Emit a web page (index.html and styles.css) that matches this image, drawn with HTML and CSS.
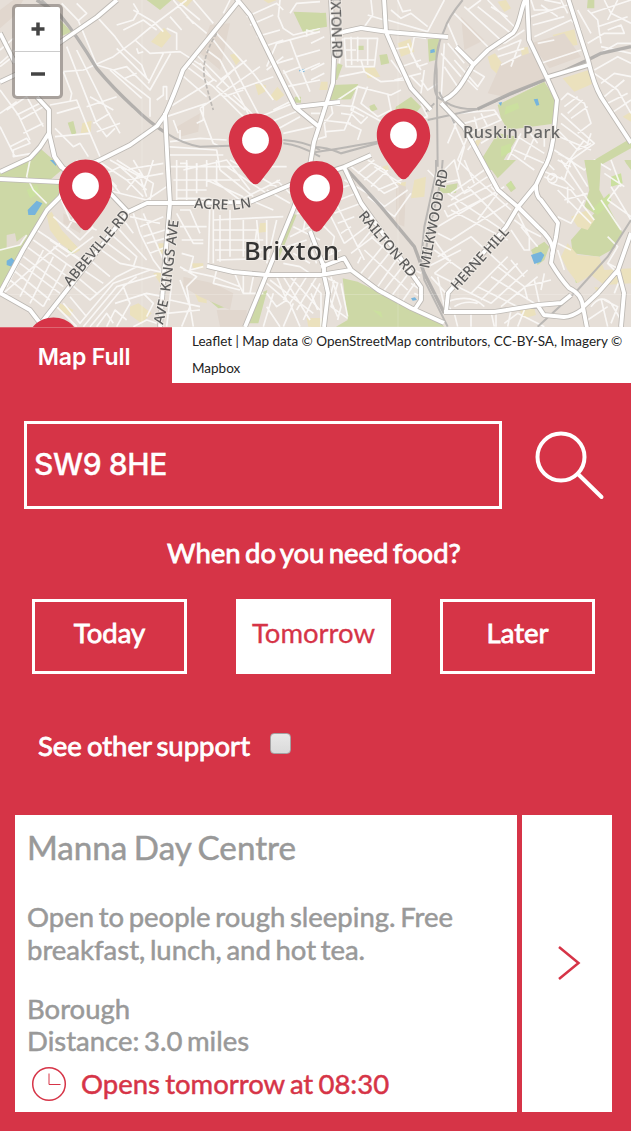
FILE: index.html
```html
<!DOCTYPE html>
<html lang="en">
<head>
<meta charset="utf-8">
<meta name="viewport" content="width=device-width, initial-scale=1">
<title>Food finder</title>
<link rel="stylesheet" href="styles.css">
</head>
<body>
<main class="page">
<section class="map">
<svg class="map-canvas" viewBox="0 0 631 327" width="631" height="327">
  <defs>
    <path id="pin" d="M0 0C-15.5 0-26.7 11.8-26.7 27C-26.7 42-14 56-5 68Q0 73.500 5 68C14 56 26.700 42 26.700 27C26.700 11.800 15.500 0 0 0Z"/>
    <g id="major">
      <path d="M117 0L97 17L62 41L15 75L0 82M238 2L213 33L183 70Q174 95 165 115L157 126L130 145L100 160L72 172M236-2L250 15L295 107L318 126M295 107L340 102M331 0L334 60L333 83L314 142L310 165L293 210L245 327M384-2L386 32L398 60L411 88L431 110M338 33L361 28L388 32L448 37M525 0C520 12 520 25 513 33L488 50L473 65L464 80Q456 94 444 100M527-2L529 40L548 80L557 100L553 140Q550 160 543 170L536 185L518 207L506 227L448 293L446 312M568-2L588 60Q594 85 601 97L631 143M441 103L464 127L478 153L498 190L518 207L538 227Q552 239 553 250L551 263Q560 278 569 288Q582 294 583 307L587 328M548 77L588 65M456 47L473 64"/>
      <path d="M536 185Q536 197 541 200L558 223L556 237L552 255M444 312L494 312L538 305L561 303L571 295M583 309Q572 317 564 317L544 315L538 306M583 307L598 293L618 270L631 233M618 270L624 293L621 327M344 167L361 203L414 277L421 287V300L415 309M267 275H320L351 270L378 290L411 308L444 323M310 231L324 267L324 275L328 293L324 327M321 267L344 258L351 270M207 266L233 272L267 275M128 212L147 203H195L250 202L290 185L344 167L371 155M165 113L168 170L170 203L165 260L160 327M42 322L128 212L110 193L61 167L55 158L49 133M0 179L60 182M72 172L60 197L47 210L23 250L0 293L30 310L40 323M37 97L49 110V133L40 147L30 158L0 172M49 133L54 156L72 180M0 33L15 63"/>
    </g>
  </defs>
  <rect class="land" width="631" height="327"/>

  <g class="tiles">
  <!-- North west quarter -->
  <g transform="scale(.33333)">
    <path class="park" d="M440 0H515L480 30ZM180 60L215 95L185 108ZM120 445L195 510H60V480L95 470ZM880 35L960 38V90L910 98ZM203 368L220 363L229 400L216 406ZM885 290H903V308H880Z"/>
    <path class="school" d="M492 83L514 107L485 143L453 125ZM530 0H578L560 20ZM690 165L705 160L720 182L708 196ZM765 252L798 255L795 275L775 286ZM832 260L853 285L830 303L808 292ZM247 370L275 362L272 395L242 400ZM790 0H830L805 10Z"/>
    <path class="built" d="M0 30L40 0H70L40 50L0 85ZM630 75L690 70L660 210L600 160ZM530 380L600 340L595 395L540 410Z"/>
    <path class="water" d="M897 210L915 206L913 216L900 217ZM150 480L166 482L165 494L152 496Z"/>
    <path class="minor" d="M185 10L235 62L290 195L340 210L450 295V350M220 95L285 195M235 62L260 40L230 10M290 50L345 110L370 145L425 195L440 235M190 215L250 210L340 170L400 125L460 75L560 0M400 10L415 35L400 60L350 75M370 90L430 60L470 90M400 30L460 65L490 95M405 120L450 160L540 155L610 200M350 145L450 245M340 210L380 200L450 270L512 160M445 250L490 160M375 235L410 220M330 210L425 295M430 155L415 160L410 145M500 85L530 100V150M510 50L545 90M520 0L580 70M540 10L600 60M580 0L640 70M560 50L620 100M470 300L490 285V260H500V300M200 140L290 370L320 410L345 385M190 215L215 280L210 305M230 150L320 330L360 400M270 290L340 330M260 320L350 290M280 370L330 340M290 395L360 370M150 315L230 300L270 400L300 470M170 340L240 320M165 385L220 440L240 430L265 470M165 410L270 400M0 150L40 115M0 190L45 150M0 200L45 165M0 270L55 345L90 420M0 340L50 305M20 330L80 290L130 380M50 345L120 310M60 360L130 320M70 400L130 370M0 380L45 470M30 440L80 415L90 430L40 450V470L95 460M540 220L620 290M560 200L640 260M570 185L650 245M590 165L690 265M640 120L700 200L790 370M620 150L660 180L760 370M650 100L760 220L820 300M600 190L640 240L510 320M700 210L650 260L735 330M740 180L660 240M780 200L600 325M800 210L850 170M640 260L730 350M710 270L820 230M700 285L760 345M670 290L730 270M600 325L640 430L660 440M500 350L620 310M520 360L535 400M510 330L490 350M510 425L600 415L680 420M540 390V420M610 320V360L590 370M500 440L650 450L660 510M500 465L670 465M540 490H560V510M590 490V510M690 0L670 40M750 75L820 45M770 110L840 90M790 140L850 120M740 50L830 10L850 30M840 0L835 50L850 85L880 105L960 85M870 40L890 10L960 5M800 200L830 130L960 95M870 120L900 200L930 275M830 190L880 175M850 220L900 200M890 170L960 150M900 215L960 190M860 260L960 240M850 210L900 300M820 330L880 300M780 350L880 310M790 375L900 330M810 400L900 350M850 400L940 380M920 110V90L945 100"/>
    <path class="rail wide" d="M110 0L180 45Q230 105 290 205Q340 265 400 320Q450 370 500 400"/>
    <path class="rail" d="M500 400Q550 432 600 440L690 437M125 0L190 60M850 420Q920 425 960 450M850 430Q900 435 960 470"/>
    <path class="tunnel" d="M650 100Q600 180 615 240T640 330"/>
  </g>

  <!-- North east quarter -->
  <g transform="translate(311 0) scale(.33333)">
    <path class="park" d="M0 40L45 38L48 80L0 88ZM80 190L95 195L78 240H65ZM65 255L142 252L120 298L55 300ZM350 118L385 115L375 180L354 185ZM205 165L228 162L235 190L210 195ZM138 137H158V150H138ZM175 318L190 312L200 328L180 336ZM255 320L300 290L330 320L310 345H250ZM560 315L700 245L735 300L722 372L590 390L570 355ZM560 400L620 410L560 510H525L510 480ZM850 480L960 415V445L860 500ZM830 0H850V25H828Z"/>
    <path class="woods" d="M585 320L620 308L625 325L580 345ZM570 440L600 430L600 455L570 470Z"/>
    <path class="school" d="M560 5L585 0L600 25L580 36ZM260 130L298 116L310 155L270 170ZM160 205L190 200L208 230L170 235ZM530 170L552 160L580 200L565 228L540 205ZM725 105L790 88L800 135L750 142ZM755 235L840 208L848 250L790 275ZM628 145L650 140L655 165L635 172ZM490 420L510 420L500 442ZM935 350L960 335V365ZM30 245H50V270H25ZM215 500L230 495L235 510H215Z"/>
    <path class="built" d="M570 190L680 150L710 240L580 290L530 280ZM660 130L760 100L810 170L715 205ZM450 50L520 120L460 150Z"/>
    <path class="water" d="M358 150L370 146L372 157L358 160ZM668 298L680 296L685 315L676 317ZM562 308L573 306L570 318Z"/>
    <path class="minor" d="M100 115H200L190 200H105ZM120 110L122 195M140 110V185M170 115V195M105 180H190M105 150H135M95 115L85 190M0 210L40 190M0 130L40 110M0 240L40 220M0 315H40M85 230L160 215L210 245L280 240M140 260L240 285L270 270M160 215L150 180M20 310L130 320L240 380L350 350M60 310L65 340L40 370L45 410L10 420M130 320L100 390L45 395M80 300L140 260L120 330L160 350M170 260L150 310L200 350L240 330L230 280M110 370L150 390L140 420M90 340L125 345L150 370L170 350M0 340H40M30 360L120 370M180 0L185 45L160 80M170 45L220 60M230 60L350 95L400 0M240 30L270 55L300 40L350 80M260 0L275 35L300 30M250 100L345 115M310 110L300 160L330 210M290 130L320 200L350 190M240 150L290 140M270 200L330 180M330 240L350 270L380 250M340 210L330 280M300 230L330 260M350 350L330 310M240 180L300 260M250 240L330 220M460 20L580 130M430 40L540 150M410 70L440 140M500 20L600 100M470 30L510 0M530 0L620 90M540 20L590 50M580 130L640 90M410 130L460 190M390 160L450 230M400 200L440 260M400 130L390 300M470 200L520 230L500 260L430 180M470 240L500 270M560 150L630 120L600 200M560 170L640 145M570 195L630 165M660 50L770 15M665 75L760 50M670 110L780 60L810 90M690 15L740 50M700 0L750 10M750 0L770 40M660 0L670 30L720 30M680 130L730 120M690 190L810 150M840 40L960 0M860 80L950 50M830 130L880 100L940 100L930 75L890 90M830 30L860 60L870 130M800 30L840 100M880 0L900 40L960 70M890 60L920 0M850 170L920 130L960 130M850 210L920 170L960 190M870 140L960 160M850 220L920 270L960 340M870 250L910 220L960 230M880 290L940 240M890 310L950 280M900 340L960 300M750 300L770 280L820 310L840 370L800 400M760 320L800 290M770 340L815 300M780 355L830 320M750 370L830 430L840 400M740 390L800 450L840 430M750 340L850 430L780 480L740 460M720 400L840 450M730 450L820 510L850 480L900 510M740 480L780 500M760 500L820 420M620 410L700 460M610 450L700 490M600 460L670 510M630 400L590 480M650 390L680 430M680 390L640 480M700 400L700 440M440 340L550 330L570 360L480 400M460 370L560 340M490 350L500 390M510 340L530 380M420 350L460 440L440 510M440 360L410 430M470 410L440 480M500 410L470 450M510 430L560 400"/>
    <path class="rail" d="M455 0Q410 55 400 90Q370 150 377 210L380 500M385 130Q370 200 370 250T400 300L430 370M0 440Q50 440 90 460L200 430M0 458Q60 450 200 425M350 360L500 327L700 240M385 275Q400 330 500 327M345 335L370 310"/>
    <path class="rail wide" d="M500 327L600 280L700 240L830 180L870 160L960 140"/>
  </g>

  <!-- South west quarter -->
  <g transform="translate(0 160) scale(.33333)">
    <path class="park" d="M0 60L80 50L180 68V100L135 150L70 265L0 385ZM60 0H170L185 30L150 60L0 55V35ZM872 158L890 165L835 300L818 280ZM780 400L802 390L775 490H745ZM203 260L220 250L240 270L208 285ZM620 415L680 405L690 440L655 445Z"/>
    <path class="woods" d="M80 90L110 75L120 100L90 115Z"/>
    <path class="school" d="M140 165L155 155L185 210L240 270L225 280L180 250L150 210ZM780 190L800 188L802 215L775 218ZM475 250L502 250L505 280L478 282ZM390 440L415 430L455 460L425 490L390 465ZM580 390L620 375V430L595 425ZM180 430L220 450L210 470L175 450ZM920 475H960V500H925ZM460 340L485 335L480 370ZM575 310H610V325H580Z"/>
    <path class="built" d="M550 350L640 370L700 400L690 450L600 410L550 380ZM190 160L250 190L240 220L190 190ZM650 450L740 450V500H660Z"/>
    <path class="clearing" d="M20 225L45 220L50 245L75 225L65 255L20 265Z"/>
    <path class="water" d="M83 150L110 122L127 130L105 165H85ZM20 302L35 293L48 307L35 320L20 315ZM150 0H168V18Z"/>
    <path class="minor" d="M90 0L80 50L100 90L140 130M0 270L60 255L80 225M250 0L320 90L440 120L500 80M230 0L290 60L330 60L360 100M270 0L350 80M290 0L380 60L430 110M330 0L420 50L440 110M350 0L460 70L450 120M370 30L490 10M380 60L490 40M380 90L420 40M320 40L360 20M360 20L440 90M400 0L430 50M300 20L340 90M460 0L430 90M180 110L210 180L290 210M160 170L240 240L280 200M200 210L230 160M160 260L200 290L280 230M150 240L240 300M110 210L260 310M100 240L240 340M80 260L230 370M70 290L190 380M60 310L180 400M40 330L150 420M30 360L130 440M90 240L20 380M130 270L60 410M160 290L90 430M200 310L130 440M10 400L180 250M400 160L420 220L460 300L490 340M430 160L490 300M330 220L410 290L400 320M350 200L440 300M370 180L400 220M390 170L480 190M420 200L490 170M430 230L495 210M440 250L495 235M450 280L500 260M290 260L360 310L410 320L500 340M310 240L390 300M270 300L330 350M250 330L310 370M230 350L290 400M210 370L270 420L350 350L410 320M190 430L240 490L340 370L450 330M170 440L230 500M210 410L260 470M250 500L350 380L470 345M270 500L380 370M290 500L320 460L340 490M320 500L345 450L380 480M350 500L390 430L370 380L410 350M400 500L440 480L470 490M430 400L460 430L440 470M345 430L440 400L490 410M510 20H860M520 60H720M530 0V120M560 0V120M590 10V100M620 0V80M650 0V70M530 90H620M530 115H630L625 310M550 30L680 0L750 90M640 60L720 120L840 60M660 30L760 110M680 20L800 100M690 0L830 80M620 60L730 110M640 150V310M660 165V305M690 150V290M640 180L850 170M640 210H770L760 290M640 240H790M645 270H790M650 300L810 295M730 180V290M770 180L780 280M800 180V300M830 180L800 310M800 90L870 130M830 60L870 100M750 120L820 150M540 150H570L600 220M530 160L580 250H610M540 200H620M545 240H610M545 280L580 290L570 330L610 320M540 320L590 350L560 380L580 500M540 360L570 440L545 500M510 420L600 440M500 460L600 450M515 370L500 500M550 330L640 350L720 380L730 400H790M650 330L640 370L720 390M700 330L720 380M730 340V400M760 350L750 400M800 370L870 430L900 500M810 360L940 460M830 350L860 420L830 440L800 400M850 350L930 480M870 350L960 450M890 350L850 420M920 350L870 430M950 350L890 450M960 370L910 480M820 400L790 500M800 440L840 500M880 430L850 500M890 160H960M880 200L960 240M870 230L930 200M860 260L920 240M940 230L930 260L950 310M920 160L910 210M880 280L930 310M850 310L900 320L930 340"/>
  </g>

  <!-- South east quarter -->
  <g transform="translate(311 160) scale(.33333)">
    <path class="park" d="M95 355L140 365L300 445L390 490L400 500H75L110 480ZM520 0H615L560 55ZM585 75L600 62L615 85L600 97ZM820 0H870L865 90L935 220L910 265L865 290L785 280L780 240L850 160L820 140L835 90ZM380 80L440 70L435 98L385 100ZM660 270L700 245L715 260L700 300L680 315ZM940 0H960V30L945 10Z"/>
    <path class="woods" d="M840 150L895 100L900 125L860 165ZM900 50L930 40L935 70L900 80ZM790 350L820 330V350L795 370ZM185 450L210 455L215 475ZM585 75L600 62L610 90Z"/>
    <path class="school" d="M310 60L345 50L340 110L300 115ZM780 170L830 150L850 180L830 210L800 200ZM770 250L800 285L865 290L880 330L960 325V370L880 375L840 345L800 370L770 330L750 290ZM625 450L670 445L675 465L640 475ZM0 475H40V500H0ZM260 70L285 65L280 100ZM850 380L870 385L860 405Z"/>
    <path class="built" d="M255 70L285 80L280 200L255 190Z"/>
    <path class="water" d="M660 285L690 275L700 285L690 305L670 312ZM300 415L312 412L318 420L305 422Z"/>
    <path class="minor" d="M50 100L130 70M60 130L135 100M70 160L150 130M80 190L130 170M90 220L120 200M50 150L100 250M70 120L130 240M30 190L70 230L60 280M120 20L220 100L260 80L220 30L170 0M140 40L190 0M160 60L210 20M180 80L230 30M200 90L270 60L310 0M150 80L220 140L290 90M170 110L250 170L300 100M190 20L270 70M100 60L170 100M110 200L140 260L190 200M100 250L180 190M120 280L200 220M150 340L230 240M170 360L250 260M200 380L270 280M220 390L290 300M240 410L300 330M130 240L160 300M140 310L150 290M270 430L325 350M180 230L270 310L330 340M160 270L290 390M350 30L390 70L440 60L460 100L480 90M400 30L430 0L450 80M460 0L490 70M440 0L500 60M420 100L520 30M420 120L530 50M410 140L550 70M400 150L410 170L560 95M380 220L420 240L590 130M380 200L580 80M410 100L590 220M420 150L590 240M430 130L450 160M470 80L590 200M500 60L600 150M540 80L560 100L500 180M370 240L420 310M370 270L480 350M380 290L480 230L590 330M350 320L450 270M370 340L420 300M420 370L500 280M480 400L590 290M510 420L620 310M540 430L650 330M570 440L680 350M440 380L540 430M500 380L620 440M540 350L670 430M560 320L640 380L720 360M600 300L640 350M640 380L650 420M670 360L685 430M700 340L690 390M600 210L640 270H655V230L620 160M610 180L650 210L690 230M630 200L680 260M640 160L700 220M360 350L405 400M380 350L400 440M370 340L430 370M400 420L420 450M410 425Q480 400 520 440M430 440Q460 420 500 430M300 370L330 390M310 400L330 410M20 300L90 270M40 350L80 370L60 440L110 475M60 350L90 440L80 480M40 380L80 470M90 370L110 470M70 360L60 400M0 370L30 400V500M0 400L20 450M540 455L550 500M600 450L590 500M640 450L620 500M480 460V500M430 460L440 500M555 455V500M580 490L620 460L700 500M700 0L730 30M750 0L850 150M780 0L830 80M720 70L780 90L850 180M730 50L720 60L700 50M690 30L760 60L780 0M740 90L840 190M760 120L830 100M740 170L780 190L820 120M770 80V130M750 50L790 90M870 120L930 210M900 80L960 180M930 70L890 120L960 170M880 40L940 80M900 0L930 80M840 440Q870 400 900 430L930 480M870 415L890 500M880 420L920 440L900 490M910 400L930 350M830 480L890 440M890 230L920 260L890 310L930 330M740 250L780 270M740 270L760 330M890 310L920 340"/>
    <circle class="minor" cx="724" cy="55" r="14"/>
    <path class="rail wide" d="M100 20L210 140L310 260L340 340L400 460"/>
    <path class="rail" d="M375 0V40L340 200L330 300L340 360L410 500M395 0L390 60L350 230L340 320M680 500L800 390L890 290L960 180"/>
  </g>

  <use href="#major" class="casing"/>
  <use href="#major" class="road"/>
  <path class="seam" d="M142 0V327M398 0V327M0 294.500H631"/>
  </g>

  <g class="street">
    <text transform="translate(330 -20) rotate(88)" textLength="79">BRIXTON RD</text>
    <text transform="translate(194 208) rotate(3)" textLength="34">ACRE</text>
    <text transform="translate(233 210) rotate(-9)" textLength="19">LN</text>
    <text transform="translate(70 287) rotate(-50)" textLength="94">ABBEVILLE RD</text>
    <text transform="translate(163 325) rotate(-77)" textLength="25">AVE</text>
    <text transform="translate(170 292) rotate(-83)" textLength="72">KINGS AVE</text>
    <text transform="translate(358 216) rotate(50)" textLength="81">RAILTON RD</text>
    <text transform="translate(429 269) rotate(-79)" textLength="101">MILKWOOD RD</text>
    <text transform="translate(457 291) rotate(-48)" textLength="79">HERNE HILL</text>
  </g>
  <text class="park-name" x="463" y="138" textLength="97">Ruskin Park</text>
  <text class="district" x="244" y="260" textLength="95">Brixton</text>

  <g class="pins">
    <use href="#pin" x="255.500" y="113.500"/><circle cx="255.500" cy="140.300" r="13.400"/>
    <use href="#pin" x="403.500" y="108.500"/><circle cx="403.500" cy="135" r="13.400"/>
    <use href="#pin" x="85.500" y="159.500"/><circle cx="85.500" cy="186" r="13.400"/>
    <use href="#pin" x="316.500" y="161"/><circle cx="316.500" cy="188" r="13.400"/>
    <use href="#pin" x="53.500" y="317.500"/>
  </g>
</svg>
<div class="zoom-control">
  <button class="zoom-button" aria-label="Zoom in"><svg width="14" height="14"><path d="M7 .5V13.500M.5 7H13.500"/></svg></button>
  <button class="zoom-button" aria-label="Zoom out"><svg width="14" height="14"><path d="M0 7H14"/></svg></button>
</div>
</section>

<div class="map-bar">
  <button class="map-full"><span>Map Full</span></button>
  <p class="attribution">Leaflet | Map data © OpenStreetMap contributors, CC-BY-SA, Imagery ©<br>Mapbox</p>
</div>

<form class="search">
  <div class="postcode">SW9 8HE</div>
  <svg class="search-icon" width="72" height="72" viewBox="0 0 72 72"><circle cx="27" cy="27" r="23.500"/><path d="M44 44L67.500 67"/></svg>
</form>

<h2 class="question">When do you need food?</h2>
<div class="days">
  <button class="day">Today</button>
  <button class="day selected">Tomorrow</button>
  <button class="day">Later</button>
</div>

<label class="support"><span>See other support</span><i class="checkbox"></i></label>

<article class="result">
  <div class="details">
    <h3 class="name">Manna Day Centre</h3>
    <p class="about">Open to people rough sleeping. Free<br>breakfast, lunch, and hot tea.</p>
    <p class="place">Borough<br>Distance: 3.0 miles</p>
    <p class="hours"><svg width="36" height="36" viewBox="0 0 36 36"><circle cx="18" cy="18" r="16.300"/><path class="hands" d="M18 7.500V18.500H29.500"/></svg><span>Opens tomorrow at 08:30</span></p>
  </div>
  <div class="open"><svg width="26" height="40" viewBox="0 0 26 40"><path d="M3 4L22.500 20L3 36"/></svg></div>
</article>
</main>
</body>
</html>
```
FILE: styles.css
```css
* { box-sizing: border-box; }
body { margin: 0; background: #d63447; font-family: Lato, sans-serif; }
button { border: 0; padding: 0; margin: 0; font-family: inherit; }
p, h2, h3 { margin: 0; font-weight: 400; }

.page { width: 631px; height: 1131px; overflow: hidden; display: flex; flex-direction: column; background: #d63447; color: #fff; }

.map { position: relative; height: 327px; }
.map-canvas { display: block; overflow: hidden; }
.tiles { filter: blur(.45px); }
.land { fill: #e6dfd8; }
.built { fill: #e1d7ce; }
.park { fill: #cdd8a6; }
.woods { fill: #cbe09f; }
.school { fill: #ebe1bd; }
.clearing { fill: #e2dbd0; }
.water { fill: #76b4dc; }
.minor { fill: none; stroke: #fbfaf8; stroke-width: 5; stroke-opacity: .9; stroke-linejoin: round; }
.rail { fill: none; stroke: #b5b3b0; stroke-width: 6; stroke-opacity: .9; }
.wide { stroke-width: 10; stroke: #adaba9; }
.tunnel { fill: none; stroke: #bdb9b5; stroke-width: 5; stroke-dasharray: 12 6; }
.casing { fill: none; stroke: #bcb8b3; stroke-width: 5.6; stroke-linejoin: round; }
.road { fill: none; stroke: #fff; stroke-width: 3.9; stroke-linejoin: round; }
.seam { fill: none; stroke: #fff; stroke-opacity: .2; }
.street { font: 500 14px "Noto Sans", sans-serif; fill: #5c5c5c; stroke: #eee9e3; stroke-width: 2px; paint-order: stroke; }
.park-name { font: 500 16.5px "Noto Sans", sans-serif; fill: #666; stroke: #e8e3dc; stroke-width: 1.5px; paint-order: stroke; }
.district { font: 500 25.5px "Noto Sans", sans-serif; fill: #333; stroke: #eee9e3; stroke-width: 2px; paint-order: stroke; }
.pins { fill: #d63447; }
.pins circle { fill: #fff; }

.zoom-control { position: absolute; left: 12px; top: 4px; width: 51px; height: 95px; border: 3px solid rgba(105, 100, 96, .5); border-radius: 5px; background: #fff; background-clip: padding-box; display: flex; flex-direction: column; }
.zoom-button { flex: 1; display: grid; place-items: center; background: none; }
.zoom-button + .zoom-button { border-top: 1px solid #ccc; }
.zoom-button path { stroke: #444; stroke-width: 3.5; }

.map-bar { height: 56px; display: flex; background: #fff; }
.map-full { width: 172px; border-top: 1px solid #dd6672; background: #d63447; color: #fff; font: 600 23px Inter, sans-serif; padding: 2px 4px 0 0; letter-spacing: -.1px; }
.attribution { padding: 1px 0 0 20px; color: #222; font-size: 13.5px; line-height: 27px; white-space: nowrap; }

.search { display: flex; align-items: flex-start; padding: 38px 0 0 24px; gap: 32px; }
.postcode { width: 478px; height: 88px; border: 3.5px solid #fff; padding: 0 7px; font: 500 30px/81px Inter, sans-serif; letter-spacing: -.4px; -webkit-text-stroke: .3px #fff; }
.search-icon { margin-top: 8.5px; fill: none; stroke: #fff; stroke-width: 4; stroke-linecap: round; }

.question { margin-top: 26px; padding-right: 3px; text-align: center; font-size: 27.5px; line-height: 36px; word-spacing: -2.7px; -webkit-text-stroke: .8px #fff; }
.days { display: flex; gap: 49px; padding: 28px 0 0 32px; }
.day { width: 155px; height: 75px; border: 3px solid #fff; background: none; color: #fff; font-size: 27.5px; padding-bottom: 9px; -webkit-text-stroke: .8px #fff; }
.selected { background: #fff; color: #d63447; -webkit-text-stroke: .3px #d63447; }

.support { display: flex; align-items: flex-start; gap: 20px; margin-top: 54px; padding-left: 38px; height: 87px; font-size: 27.5px; line-height: 36px; word-spacing: -2px; -webkit-text-stroke: .8px #fff; }
.checkbox { width: 21px; height: 21px; margin-top: 5px; border: 1.5px solid #a5a1a2; border-radius: 4px; background: linear-gradient(#e8e8e8, #dadada); }

.result { display: flex; gap: 5px; padding-left: 15px; height: 297px; }
.details { width: 502px; background: #fff; color: #999; padding: 12px 0 0 12px; font-size: 27.5px; word-spacing: -2.4px; -webkit-text-stroke: .5px #999; }
.name { font-size: 33.2px; line-height: 40px; word-spacing: -2px; }
.about { margin-top: 33px; line-height: 33px; }
.place { margin-top: 27px; line-height: 32px; }
.hours { display: flex; align-items: center; gap: 14px; padding-left: 4px; margin-top: 9px; color: #d63447; line-height: 34px; word-spacing: -1.8px; -webkit-text-stroke: .5px #d63447; }
.hours svg { fill: none; stroke: #d63447; stroke-width: 1.5; }
.hours .hands { stroke-width: 1; }
.open { width: 90px; background: #fff; display: grid; place-items: center; padding: 0 0 2px 3px; }
.open svg { fill: none; stroke: #d63447; stroke-width: 2.5; }
```
